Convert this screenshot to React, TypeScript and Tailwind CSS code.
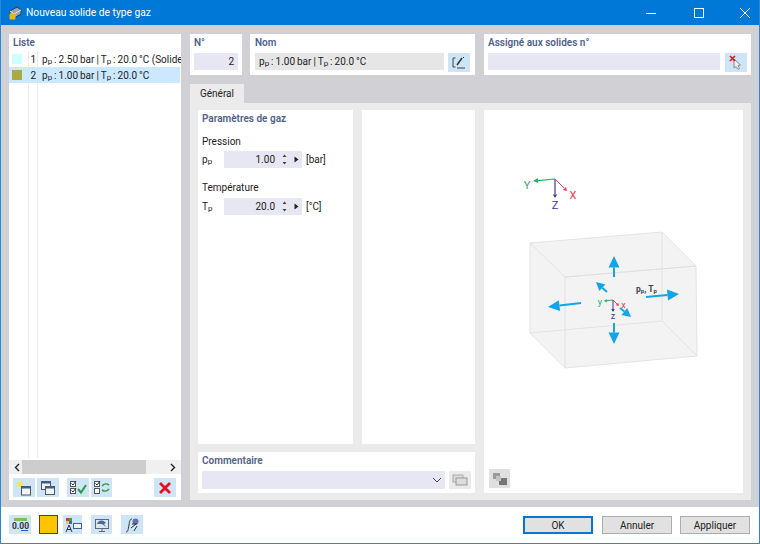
import React from "react";

const Sub: React.FC<{ s: string; b: string }> = ({ s, b }) => (
  <span>
    {b}
    <span className="text-[8px] relative top-[1px]">{s}</span>
  </span>
);

const GasName: React.FC<{ p: string }> = ({ p }) => (
  <span className="[word-spacing:-0.5px]">
    <Sub b="p" s="p" /> : {p} bar | <Sub b="T" s="p" /> : 20.0 °C
  </span>
);

const Heading: React.FC<{ children: React.ReactNode }> = ({ children }) => (
  <div className="font-semibold text-[#50628a] leading-[14px]">{children}</div>
);

const IconButton: React.FC<{ className?: string; children: React.ReactNode }> = ({ className = "w-[22px]", children }) => (
  <div className={`${className} h-[19px] bg-[#cde5f7] flex items-center justify-center shrink-0`}>{children}</div>
);

const Spinner: React.FC = () => (
  <div className="flex items-center gap-[6px] ml-[6px] mr-[3px]">
    <svg width="7" height="13" viewBox="0 0 7 13">
      <path d="M3.5 1.5 L5.5 4 H1.5 Z M1.5 9 H5.5 L3.5 11.5 Z" fill="#444" />
    </svg>
    <svg width="5" height="7" viewBox="0 0 5 7">
      <path d="M0.5 0.5 L4.5 3.5 L0.5 6.5 Z" fill="#222" />
    </svg>
  </div>
);

const Field: React.FC<{ label: React.ReactNode; value: string; unit: string }> = ({ label, value, unit }) => (
  <div className="flex items-center h-[17px]">
    <div className="w-[22px]">{label}</div>
    <div className="w-[78px] h-[17px] bg-[#e6e7f2] flex items-center justify-end">
      <span>{value}</span>
      <Spinner />
    </div>
    <div className="ml-[4px]">{unit}</div>
  </div>
);

const Arrow: React.FC<{ x1: number; y1: number; x2: number; y2: number; color: string; w?: number; head?: number; k?: number }> = ({
  x1,
  y1,
  x2,
  y2,
  color,
  w = 1,
  head = 4,
  k = 1.6,
}) => {
  const len = Math.hypot(x2 - x1, y2 - y1);
  const ux = (x2 - x1) / len;
  const uy = (y2 - y1) / len;
  const bx = x2 - ux * head * k;
  const by = y2 - uy * head * k;
  const pts = `${x2},${y2} ${bx - uy * head},${by + ux * head} ${bx + uy * head},${by - ux * head}`;
  return (
    <g>
      <line x1={x1} y1={y1} x2={bx} y2={by} stroke={color} strokeWidth={w} />
      <polygon points={pts} fill={color} />
    </g>
  );
};

const Preview: React.FC = () => {
  const blue = "#12a5ea";
  return (
    <svg className="w-full h-full" viewBox="484 110 259 383">
      <polygon points="530,243 662,232 696,266 697,356 565,368 530,333" fill="#f3f3f3" />
      <g fill="none" stroke="#dedede" strokeWidth="0.8">
        <polygon points="530,243 662,232 696,266 565,277" />
        <polygon points="565,277 696,266 697,356 565,368" />
        <line x1="530" y1="243" x2="530" y2="333" />
        <line x1="530" y1="333" x2="565" y2="368" />
        <line x1="662" y1="232" x2="662" y2="321" />
        <line x1="662" y1="321" x2="697" y2="356" />
        <line x1="530" y1="333" x2="662" y2="321" />
      </g>
      <Arrow x1={614} y1={277} x2={614} y2={256} color={blue} w={2} head={5.5} k={2.1} />
      <Arrow x1={614} y1={323} x2={614} y2={344} color={blue} w={2} head={5.5} k={2.1} />
      <Arrow x1={581} y1={303} x2={548} y2={307} color={blue} w={2} head={5.5} k={2.1} />
      <Arrow x1={646} y1={297} x2={679} y2={294} color={blue} w={2} head={5.5} k={2.1} />
      <Arrow x1={607} y1={292} x2={596} y2={282} color={blue} w={2} head={4.5} k={1.9} />
      <Arrow x1={620} y1={308} x2={631} y2={317} color={blue} w={2} head={4.5} k={1.9} />

      <Arrow x1={613} y1={300} x2={604} y2={301} color="#1eb464" head={1.8} />
      <Arrow x1={613} y1={300} x2={613} y2={312} color="#3a3a96" head={1.8} />
      <Arrow x1={613} y1={300} x2={619} y2={306} color="#ee3b4b" head={1.8} />
      <text x="600" y="305" fontSize="9" textAnchor="middle" fill="#1eb464">y</text>
      <text x="613" y="319" fontSize="9" textAnchor="middle" fill="#3a3a96">z</text>
      <text x="623.5" y="308" fontSize="9" textAnchor="middle" fill="#ee3b4b">x</text>
      <text x="636" y="292" fontSize="8.5" fontWeight="700" fill="#444">
        p<tspan fontSize="6" dy="1">p</tspan>
        <tspan dy="-1">, T</tspan>
        <tspan fontSize="6" dy="1">p</tspan>
      </text>

      <Arrow x1={555} y1={179} x2={533} y2={181} color="#1eb464" head={2.5} k={2} w={1.2} />
      <Arrow x1={555} y1={179} x2={555} y2={198} color="#3a3a96" head={2.2} w={1.2} />
      <Arrow x1={555} y1={179} x2={567} y2={191} color="#ee3b4b" head={2.2} />
      <text x="527" y="189" fontSize="11" textAnchor="middle" fill="#1eb464">Y</text>
      <text x="555" y="209" fontSize="11" textAnchor="middle" fill="#3a3a96">Z</text>
      <text x="573" y="199" fontSize="11" textAnchor="middle" fill="#ee3b4b">X</text>
    </svg>
  );
};

const App: React.FC = () => {
  return (
    <div className="w-[760px] h-[544px] flex flex-col border-x border-b border-[#2b88d8] text-[10px] text-[#222] font-['Roboto',sans-serif] overflow-hidden bg-white">
      <div className="h-[25px] shrink-0 -mx-px bg-[#0078d7] flex items-center text-white">
        <svg className="ml-[8px]" width="15" height="15" viewBox="0 0 15 15">
          <path d="M2 6 L9 2 L13 5 L13 9 L6 13 L2 10 Z" fill="#9aa4b4" stroke="#2d3a4d" strokeWidth="1" />
          <path d="M2 6 L6 9 L13 5 M6 9 V13" fill="none" stroke="#e4e8ee" strokeWidth="1" />
          <rect x="1.5" y="8.5" width="6" height="6" rx="1" fill="#f2b705" />
        </svg>
        <span className="ml-[3px] text-[10.25px]">Nouveau solide de type gaz</span>
        <div className="ml-auto flex items-center">
          <svg className="mr-[38px]" width="10" height="10" viewBox="0 0 10 10">
            <path d="M0 5.5 H10" stroke="#fff" strokeWidth="1" />
          </svg>
          <svg className="mr-[36px]" width="10" height="10" viewBox="0 0 10 10">
            <rect x="0.5" y="0.5" width="9" height="9" fill="none" stroke="#fff" strokeWidth="1" />
          </svg>
          <svg className="mr-[10px]" width="10" height="10" viewBox="0 0 10 10">
            <path d="M0 0 L10 10 M10 0 L0 10" stroke="#fff" strokeWidth="1" />
          </svg>
        </div>
      </div>

      <div className="flex-1 min-h-0 bg-[#d0d0d5] flex gap-[9px] pt-[9px] px-[8px] pb-[7px]">
        {/* liste */}
        <div className="w-[172px] bg-white flex flex-col">
          <div className="h-[17px] pl-[4px] pt-[2px] shrink-0">
            <Heading>Liste</Heading>
          </div>
          <div className="flex-1 relative overflow-hidden">
            <div className="absolute inset-y-0 left-[19px] w-[10px] border-x border-[#ececec]" />
            <div className="relative h-[16px] flex items-center whitespace-nowrap">
              <div className="w-[10px] h-[10px] ml-[3px] bg-[#ccffff] shrink-0" />
              <div className="w-[14px] text-right shrink-0">1</div>
              <div className="ml-[6px]">
                <GasName p="2.50" /> (Solide
              </div>
            </div>
            <div className="relative h-[16px] flex items-center whitespace-nowrap bg-[#cce8ff] mr-px">
              <div className="w-[10px] h-[10px] ml-[3px] bg-[#aaaa44] shrink-0" />
              <div className="w-[14px] text-right shrink-0">2</div>
              <div className="ml-[6px]">
                <GasName p="1.00" />
              </div>
            </div>
          </div>
          <div className="h-[14px] shrink-0 bg-[#f0f0f0] flex items-center justify-between px-[5px] mt-[2px]">
            <svg width="6" height="9" viewBox="0 0 6 9">
              <path d="M5 1 L1.5 4.5 L5 8" fill="none" stroke="#222" strokeWidth="1.4" />
            </svg>
            <div className="w-[124px] h-[14px] bg-[#cdcdcd] -ml-[22px]" />
            <svg width="6" height="9" viewBox="0 0 6 9">
              <path d="M1 1 L4.5 4.5 L1 8" fill="none" stroke="#222" strokeWidth="1.4" />
            </svg>
          </div>
          <div className="h-[26px] shrink-0 flex items-start pt-[4px] pl-[4px]">
            <IconButton>
              <svg width="16" height="16" viewBox="0 0 16 16">
                <path d="M4 0 L5 3 L8 2 L6 4.5 L8 7 L5 6 L4 9 L3 6 L0 7 L2 4.5 L0 2 L3 3 Z" fill="#f5e642" />
                <rect x="5.5" y="6.5" width="9" height="8.5" fill="#f2f2f2" stroke="#4a5568" />
                <rect x="5.5" y="6.5" width="9" height="2" fill="#3f5f94" />
              </svg>
            </IconButton>
            <IconButton className="w-[22px] ml-[2px]">
              <svg width="16" height="16" viewBox="0 0 16 16">
                <rect x="1.5" y="1.5" width="9" height="8" fill="#f2f2f2" stroke="#4a5568" />
                <rect x="1.5" y="1.5" width="9" height="2" fill="#3f5f94" />
                <rect x="5.5" y="6.5" width="9" height="8" fill="#f2f2f2" stroke="#4a5568" />
                <rect x="5.5" y="6.5" width="9" height="2" fill="#3f5f94" />
              </svg>
            </IconButton>
            <IconButton className="w-[22px] ml-[8px]">
              <svg width="18" height="15" viewBox="0 0 18 15">
                <rect x="1.5" y="1.5" width="5" height="5" fill="#fff" stroke="#555" />
                <rect x="1.5" y="8.5" width="5" height="5" fill="#fff" stroke="#555" />
                <path d="M2.5 3.5 L4 5 L7 1 M2.5 10.5 L4 12 L7 8" fill="none" stroke="#333" />
                <path d="M9 9 L12 12.5 L17 5" fill="none" stroke="#2e9e3f" strokeWidth="2" />
              </svg>
            </IconButton>
            <IconButton className="w-[21px] ml-[2px]">
              <svg width="18" height="15" viewBox="0 0 18 15">
                <rect x="1.5" y="1.5" width="5" height="5" fill="#fff" stroke="#555" />
                <rect x="1.5" y="8.5" width="5" height="5" fill="#fff" stroke="#555" />
                <path d="M2.5 3.5 L4 5 L7 1" fill="none" stroke="#333" />
                <path d="M9 6 C11 3.5 14 3.5 16 5 M16 9 C14 11.5 11 11.5 9 10" fill="none" stroke="#2e9e3f" strokeWidth="1.6" />
              </svg>
            </IconButton>
            <IconButton className="w-[22px] ml-[42px]">
              <svg width="12" height="12" viewBox="0 0 12 12">
                <path d="M1 1 L11 11 M11 1 L1 11" stroke="#e8101c" strokeWidth="2.8" />
              </svg>
            </IconButton>
          </div>
        </div>

        {/* droite */}
        <div className="flex-1 min-w-0 flex flex-col">
          <div className="h-[41px] shrink-0 flex">
            <div className="w-[52px] bg-white px-[4px] pt-[2px]">
              <Heading>N°</Heading>
              <div className="mt-[3px] h-[17px] bg-[#e6e7f2] flex items-center justify-end pr-[4px]">2</div>
            </div>
            <div className="w-[225px] ml-[8px] bg-white px-[5px] pt-[2px]">
              <Heading>Nom</Heading>
              <div className="mt-[3px] flex gap-[4px]">
                <div className="flex-1 h-[17px] bg-[#e6e6e6] flex items-center pl-[4px]">
                  <GasName p="1.00" />
                </div>
                <IconButton>
                  <svg width="14" height="13" viewBox="0 0 14 13">
                    <path d="M3.5 2 H1 V11 H3.5 M5 12 H13" fill="none" stroke="#444" />
                    <path d="M5 9 L10 2" stroke="#333" strokeWidth="1.5" />
                    <path d="M11 1 L12 2" stroke="#333" />
                  </svg>
                </IconButton>
              </div>
            </div>
            <div className="flex-1 ml-[9px] bg-white px-[4px] pt-[2px]">
              <Heading>Assigné aux solides n°</Heading>
              <div className="mt-[3px] flex gap-[5px]">
                <div className="flex-1 h-[17px] bg-[#e6e7f2]" />
                <IconButton>
                  <svg width="14" height="15" viewBox="0 0 14 15">
                    <path d="M5 4 V13 L7 11.5 L9 14.5 L10.5 13.5 L9 10.5 L11.5 10 Z" fill="#eee" stroke="#777" strokeWidth="0.8" />
                    <path d="M1 1 L6 6 M6 1 L1 6" stroke="#e8101c" strokeWidth="1.6" />
                  </svg>
                </IconButton>
              </div>
            </div>
          </div>

          <div className="mt-[9px] h-[19px] w-[54px] shrink-0 bg-[#ebebeb] flex items-center justify-center">Général</div>

          <div className="flex-1 min-h-0 bg-[#ebebeb] flex gap-[9px] p-[8px] pt-[7px] pb-[7px]">
            <div className="w-[277px] flex flex-col gap-[8px]">
              <div className="flex-1 min-h-0 flex gap-[9px]">
                <div className="w-[155px] bg-white px-[4px] pt-[2px]">
                  <Heading>Paramètres de gaz</Heading>
                  <div className="mt-[9px] leading-[14px]">Pression</div>
                  <div className="mt-[2px]">
                    <Field label={<Sub b="p" s="p" />} value="1.00" unit="[bar]" />
                  </div>
                  <div className="mt-[13px] leading-[14px]">Température</div>
                  <div className="mt-[3px]">
                    <Field label={<Sub b="T" s="p" />} value="20.0" unit="[°C]" />
                  </div>
                </div>
                <div className="flex-1 bg-white" />
              </div>
              <div className="h-[41px] shrink-0 bg-white px-[4px] pt-[2px]">
                <Heading>Commentaire</Heading>
                <div className="mt-[3px] flex gap-[4px]">
                  <div className="flex-1 h-[18px] bg-[#e6e7f2] flex items-center justify-end pr-[3px]">
                    <svg width="10" height="6" viewBox="0 0 10 6">
                      <path d="M1 1 L5 5 L9 1" fill="none" stroke="#444" />
                    </svg>
                  </div>
                  <div className="w-[22px] h-[18px] bg-[#ebebeb] flex items-center justify-center">
                    <svg width="16" height="12" viewBox="0 0 16 12">
                      <rect x="1" y="1" width="10" height="7" fill="#ddd" stroke="#aaa" />
                      <rect x="4" y="4" width="11" height="7" fill="#ddd" stroke="#999" />
                    </svg>
                  </div>
                </div>
              </div>
            </div>
            <div className="flex-1 bg-white relative">
              <Preview />
              <div className="absolute left-[5px] bottom-[5px] w-[21px] h-[19px] bg-[#e0e0e0] flex items-center justify-center">
                <svg width="16" height="14" viewBox="0 0 16 14">
                  <rect x="1" y="1" width="7" height="6" fill="#9a9a9a" />
                  <rect x="7" y="6" width="8" height="7" fill="#777" />
                  <rect x="4" y="4" width="5" height="5" fill="#c4c4c4" />
                </svg>
              </div>
            </div>
          </div>
        </div>
      </div>

      {/* pied */}
      <div className="h-[36px] shrink-0 flex items-start pt-[8px] pl-[8px]">
        <IconButton className="w-[22px]">
          <svg width="17" height="15" viewBox="0 0 17 15">
            <rect x="2" y="1" width="13" height="3" fill="#7fbf5a" />
            <text x="8.5" y="12" fontSize="8.5" fontWeight="700" textAnchor="middle" fill="#333">0.00</text>
            <path d="M9 13.5 H16" stroke="#2a62c4" />
          </svg>
        </IconButton>
        <div className="w-[19px] h-[19px] ml-[8px] bg-[#ffc400] border border-[#444] shrink-0" />
        <IconButton className="w-[19px] ml-[5px]">
          <svg width="18" height="16" viewBox="0 0 18 16">
            <rect x="2" y="1" width="3" height="3" fill="#d33" />
            <rect x="5" y="1" width="3" height="3" fill="#3a3" />
            <rect x="2" y="4" width="3" height="3" fill="#ec3" />
            <rect x="5" y="4" width="3" height="3" fill="#36c" />
            <path d="M2 15 L5 8 L8 15 M3 12.5 H7" fill="none" stroke="#333" />
            <rect x="9.5" y="6.5" width="8" height="5" fill="#f2f2f2" stroke="#3f5f94" />
          </svg>
        </IconButton>
        <IconButton className="w-[21px] ml-[9px]">
          <svg width="16" height="16" viewBox="0 0 16 16">
            <rect x="1.5" y="2.5" width="13" height="9" fill="#dfe7ee" stroke="#667" />
            <path d="M3 7 C4 3 9 2 12 6 L10 7 L12 10 L8 7 Z" fill="#3f6f9e" />
            <path d="M8 12 V14 M5 14.5 H11" stroke="#667" />
          </svg>
        </IconButton>
        <IconButton className="w-[22px] ml-[9px]">
          <svg width="18" height="16" viewBox="0 0 18 16">
            <path d="M3 15 C5 15 5 13 6 8 C6.5 4 7 2 9 2" fill="none" stroke="#333" />
            <circle cx="12.5" cy="4.5" r="3" fill="#6b6fa8" />
            <path d="M8 11 L13 7 M9 7 H14 M11 14 L14 9" stroke="#333" />
          </svg>
        </IconButton>
        <div className="ml-auto flex mr-[9px] mt-[1px]">
          <div className="w-[70px] h-[18px] bg-[#e1e1e1] border-2 border-[#0078d7] flex items-center justify-center">OK</div>
          <div className="w-[70px] h-[18px] ml-[9px] bg-[#e1e1e1] border border-[#adadad] flex items-center justify-center">Annuler</div>
          <div className="w-[70px] h-[18px] ml-[8px] bg-[#e1e1e1] border border-[#adadad] flex items-center justify-center">Appliquer</div>
        </div>
      </div>
    </div>
  );
};

export default App;
